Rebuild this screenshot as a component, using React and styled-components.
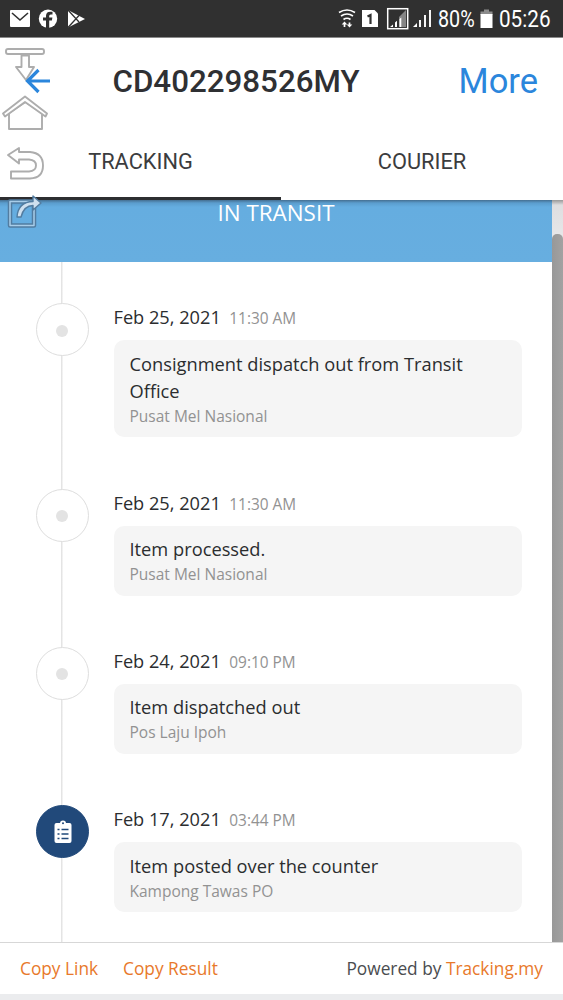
import React from "react";
import styled, { createGlobalStyle } from "styled-components";

const Global = createGlobalStyle`
  * { box-sizing: border-box; }
  html, body { margin: 0; padding: 0; background: #fff; overflow: hidden; }
  svg { display: block; flex: none; }
`;

const Screen = styled.div`
  position: relative;
  width: 563px;
  height: 1000px;
  display: flex;
  flex-direction: column;
  background: #fff;
  overflow: hidden;
  font-family: "Open Sans", sans-serif;
  color: #2b2d2f;
`;

const StatusBar = styled.div`
  height: 38px;
  flex: none;
  display: flex;
  align-items: center;
  justify-content: space-between;
  background: #303030;
  border-bottom: 1px solid #8a8a8a;
  color: #fff;
`;

const StatusText = styled.span`
  font: 400 23.5px/37px Roboto, sans-serif;
  width: ${(p) => p.$width}px;
  margin-left: ${(p) => p.$gap}px;
  padding-top: 2px;
  white-space: nowrap;
  transform: scaleX(${(p) => p.$scale});
  transform-origin: left center;
`;

const StatusGroup = styled.div`
  display: flex;
  align-items: center;
`;

const Header = styled.header`
  height: 86px;
  flex: none;
  display: flex;
  align-items: center;
  justify-content: space-between;
  padding: 0 25px 0 112.5px;
  font-family: Roboto, sans-serif;
`;

const Title = styled.h1`
  margin: 0;
  font-size: 31.3px;
  font-weight: 500;
  color: #2f3033;
`;

const More = styled.span`
  font-size: 34.5px;
  color: #2b86dc;
`;

const Tabs = styled.nav`
  height: 76px;
  flex: none;
  display: grid;
  grid-template-columns: 281px 282px;
`;

const Tab = styled.div`
  display: flex;
  align-items: center;
  justify-content: center;
  padding-top: 2px;
  font: 400 21.8px Roboto, sans-serif;
  color: #3b3c3e;
  border-bottom: 3px solid ${(p) => (p.$active ? "#2d2e31" : "transparent")};
`;

const Viewport = styled.main`
  height: 742px;
  flex: none;
  display: flex;
`;

const Page = styled.div`
  width: 552px;
  flex: none;
  display: flex;
  flex-direction: column;
`;

const Banner = styled.div`
  height: 62px;
  flex: none;
  text-align: center;
  color: #fff;
  font-size: 22.4px;
  line-height: 26px;
  background: linear-gradient(#456f91 0, #5b9dce 3px, #65ade0 7px, #67aee0 100%);
`;

const ScrollTrack = styled.div`
  flex: 1;
  padding-top: 34px;
  background: linear-gradient(#999 0, #dedee0 5px, #e6e6e8 34px);
`;

const ScrollThumb = styled.div`
  height: 708px;
  border-radius: 5px 5px 0 0;
  background: linear-gradient(90deg, #989898, #a2a2a2);
`;

const Timeline = styled.ol`
  list-style: none;
  margin: 0;
  padding: 41.2px 30px 0 36px;
  flex: 1;
  min-height: 0;
  background: linear-gradient(#e4e4e4, #e4e4e4) 61px 0 / 1.5px 100% no-repeat;
`;

const Event = styled.li`
  display: grid;
  grid-template-columns: 53px 1fr;
  column-gap: 24.5px;
  align-items: start;
  padding-bottom: 51.4px;
`;

const Marker = styled.div`
  width: 53px;
  height: 53px;
  border-radius: 50%;
  display: flex;
  align-items: center;
  justify-content: center;
  border: 1px solid ${(p) => (p.$filled ? "#21497a" : "#dedede")};
  background: ${(p) => (p.$filled ? "#21497a" : "#fff")};
`;

const Dot = styled.i`
  width: 12px;
  height: 12px;
  margin: 2px 1px 0 0;
  border-radius: 50%;
  background: #e3e3e3;
`;

const When = styled.div`
  height: 28px;
  margin-bottom: 9px;
  display: flex;
  align-items: baseline;
  gap: 8.5px;
  font-size: 18.2px;
  line-height: 28px;
`;

const Time = styled.time`
  font-size: 15.4px;
  color: #929292;
`;

const Card = styled.div`
  padding: 9.5px 16px 9px;
  border-radius: 10px;
  background: #f5f5f5;
`;

const Description = styled.div`
  font-size: 18.27px;
  line-height: 27px;
`;

const Place = styled.div`
  font-size: 15.5px;
  line-height: 24.5px;
  color: #929292;
`;

const Footer = styled.footer`
  height: 52px;
  flex: none;
  display: flex;
  align-items: center;
  gap: 25px;
  padding: 0 20px;
  border-top: 1.5px solid #d7d7d7;
  font-size: 17.3px;
`;

const Link = styled.span`
  color: #e8792b;
`;

const Powered = styled.span`
  margin-left: auto;
  color: #4a4c4f;
`;

const BottomStrip = styled.div`
  flex: 1;
  background: #ebecee;
`;

const Shortcuts = styled.aside`
  position: absolute;
  left: 0;
  top: 40px;
`;

const statusIcons = (
  <svg width="90" height="37" fill="#fff">
    <rect x="10" y="10" width="20" height="17" rx="1" />
    <path d="M12 13l8 7 8-7" fill="none" stroke="#303030" strokeWidth="1.6" />
    <circle cx="48" cy="18.7" r="9.2" />
    <path d="M46 28v-7.500h-3v-3h3V16q0-4.300 4.300-4.300h2.200v2.800h-1.700q-1.600 0-1.600 1.600v1.400h3.200l-.5 3h-2.700V28z" fill="#303030" />
    <path d="M68 10l17 9-17 8.500z" />
    <path d="M68 10l11 12M68 27.500l11-12" stroke="#303030" strokeWidth="1.3" />
  </svg>
);

const signalIcons = (
  <svg width="96" height="37" viewBox="337 0 96 37" fill="none" stroke="#fff">
    <g strokeWidth="1.7">
      <path d="M339 12.500q8-5 16 0M341 16q6-4 12 0M343.500 19.500q3.500-2.500 7 0" />
      <path d="M344.500 27v-3M349.500 22.500v3" />
    </g>
    <path d="M341.700 24.500l2.800-3 2.800 3zM346.700 24.500h5.600l-2.800 3z" fill="#fff" stroke="none" />
    <path d="M362 10h12.500l3.500 3.500V27h-16z" fill="#fff" stroke="none" />
    <path d="M367.500 16.500l3-1.500v9" stroke="#303030" strokeWidth="2.200" />
    <rect x="387.700" y="8.700" width="20" height="20" strokeWidth="1.500" />
    <path d="M399 27V17l7-7v17z" fill="#858585" stroke="none" />
    <path d="M390 27l3-2.500V27zM395 27v-4.500l2-1.700V27zM399.500 27v-8l1.800-1.500V27z" fill="#fff" stroke="none" />
    <path d="M413 27l4-4v4z" fill="#fff" stroke="none" />
    <path d="M420 27v-7M425 27V15M430 27V10" strokeWidth="1.900" />
  </svg>
);

const Battery = styled.svg`
  margin-left: 4px;
`;

const ClipboardIcon = () => (
  <svg width="18" height="24" viewBox="0 0 18 24">
    <rect x=".5" y="3" width="17" height="20" rx="2" fill="#fff" />
    <circle cx="9" cy="3.500" r="3" fill="#fff" />
    <circle cx="9" cy="3.300" r="1" fill="#21497a" />
    <path d="M3.500 9.500h2m2 0h7M3.500 14h2m2 0h7M3.500 18.500h2m2 0h7" stroke="#21497a" strokeWidth="1.600" />
  </svg>
);

const ShortcutIcons = () => (
  <svg width="56" height="192" viewBox="0 40 56 192" fill="#fff" stroke="#adadad" strokeWidth="1.900" strokeLinejoin="round">
    <rect x="6" y="49" width="38" height="5" rx="2" />
    <path d="M21.500 55.500H29V67h5L26 80l-10-13h5.500z" />
    <path d="M9 113v16h33v-16L25.500 102z" />
    <path d="M3 113.500L25 96.500l22 17-1.500 3L25 102 5 116.500z" />
    <path d="M8 155l11-7v4h11q13 1 13 13.500T30 178.500H11v-7h18q7-.5 7-6t-7-6H19v4z" />
    <g stroke="#527ca0">
      <path d="M10 201.500h24v24H10z" fill="none" strokeWidth="4.500" />
      <path d="M10 201.500h24v24H10z" fill="none" stroke="#a8cde9" strokeWidth="1.500" />
      <path d="M17 217q1-15 16-15.500v-5.500l8 7-8 7v-4.500q-9 0-12 11.500z" fill="#cfe0ef" strokeWidth="1.400" />
    </g>
    <path d="M50 81H27M38.500 70L27.500 81l11 11" fill="none" stroke="#2b86dc" strokeWidth="3.200" strokeLinejoin="miter" />
  </svg>
);

const events = [
  { date: "Feb 25, 2021", time: "11:30 AM", text: "Consignment dispatch out from Transit Office", place: "Pusat Mel Nasional" },
  { date: "Feb 25, 2021", time: "11:30 AM", text: "Item processed.", place: "Pusat Mel Nasional" },
  { date: "Feb 24, 2021", time: "09:10 PM", text: "Item dispatched out", place: "Pos Laju Ipoh" },
  { date: "Feb 17, 2021", time: "03:44 PM", text: "Item posted over the counter", place: "Kampong Tawas PO", posted: true },
];

export default function App() {
  return (
    <Screen>
      <Global />
      <StatusBar>
        {statusIcons}
        <StatusGroup>
          {signalIcons}
          <StatusText $width={38} $gap={5} $scale={0.84}>80%</StatusText>
          <Battery width="13" height="37" fill="#fff">
            <path d="M4 9.500h5v2h3.500V15H.5v-3.500H4z" fill="#8b8b8b" />
            <rect x=".5" y="14" width="12" height="14" />
          </Battery>
          <StatusText $width={64} $gap={6} $scale={0.88}>05:26</StatusText>
        </StatusGroup>
      </StatusBar>
      <Header>
        <Title>CD402298526MY</Title>
        <More>More</More>
      </Header>
      <Tabs>
        <Tab $active>TRACKING</Tab>
        <Tab>COURIER</Tab>
      </Tabs>
      <Viewport>
        <Page>
          <Banner>IN TRANSIT</Banner>
          <Timeline>
            {events.map((e, i) => (
              <Event key={i}>
                <Marker $filled={e.posted}>{e.posted ? <ClipboardIcon /> : <Dot />}</Marker>
                <div>
                  <When>
                    <span>{e.date}</span>
                    <Time>{e.time}</Time>
                  </When>
                  <Card>
                    <Description>{e.text}</Description>
                    <Place>{e.place}</Place>
                  </Card>
                </div>
              </Event>
            ))}
          </Timeline>
        </Page>
        <ScrollTrack>
          <ScrollThumb />
        </ScrollTrack>
      </Viewport>
      <Footer>
        <Link>Copy Link</Link>
        <Link>Copy Result</Link>
        <Powered>
          Powered by <Link>Tracking.my</Link>
        </Powered>
      </Footer>
      <BottomStrip />
      <Shortcuts>
        <ShortcutIcons />
      </Shortcuts>
    </Screen>
  );
}
